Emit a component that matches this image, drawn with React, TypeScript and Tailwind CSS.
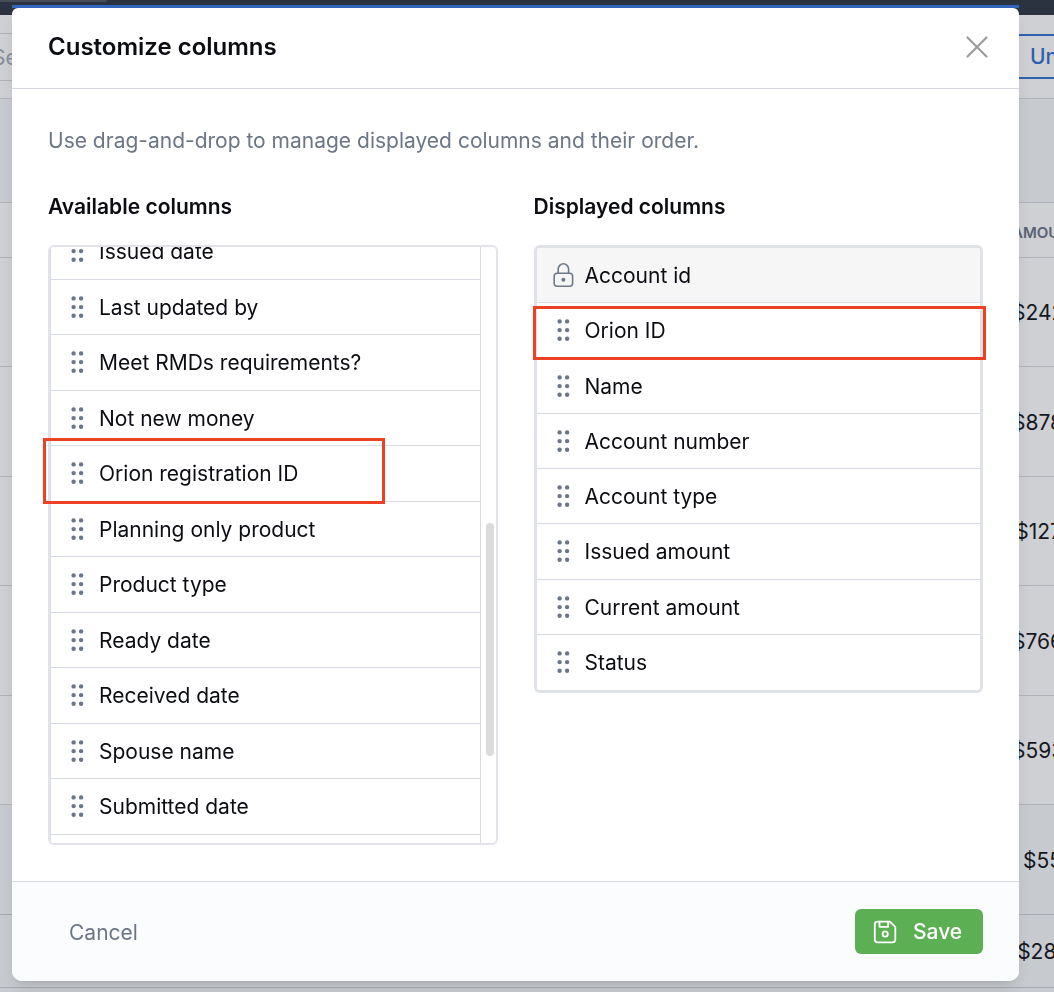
import { ReactNode } from "react";

const available = [
  "Issued date",
  "Last updated by",
  "Meet RMDs requirements?",
  "Not new money",
  "Orion registration ID",
  "Planning only product",
  "Product type",
  "Ready date",
  "Received date",
  "Spouse name",
  "Submitted date",
  "",
];

const displayed = [
  "Account id",
  "Orion ID",
  "Name",
  "Account number",
  "Account type",
  "Issued amount",
  "Current amount",
  "Status",
];

const amounts = ["$242", "$878", "$127", "$766", "$593", "$55", "$28,"];

function GripIcon() {
  return (
    <svg className="size-6 shrink-0" viewBox="0 0 24 24" fill="#6b7686" aria-hidden="true">
      {[3.4, 12.1, 20.8].map((y) => (
        <g key={y}>
          <circle cx="8.6" cy={y} r="2.2" />
          <circle cx="16.1" cy={y} r="2.2" />
        </g>
      ))}
    </svg>
  );
}

function LockIcon() {
  return (
    <svg className="size-6 shrink-0" viewBox="0 0 24 24" fill="none" stroke="#6f7a89" strokeWidth="1.6" aria-hidden="true">
      <rect x="3.2" y="10.2" width="18.4" height="13" rx="3" />
      <path d="M7.2 10.2V6a5.2 5.2 0 0 1 10.4 0v4.2" />
      <circle cx="12.4" cy="16.7" r="2" fill="#6f7a89" stroke="none" />
    </svg>
  );
}

function CloseIcon() {
  return (
    <svg className="size-6" viewBox="0 0 24 24" fill="none" stroke="#9b9b9b" strokeWidth="2.2" strokeLinecap="round" aria-hidden="true">
      <path d="M2.5 2.5l19 19M21.5 2.5l-19 19" />
    </svg>
  );
}

function SaveIcon() {
  return (
    <svg className="size-6" viewBox="0 0 24 24" fill="none" stroke="#fff" strokeWidth="1.8" strokeLinejoin="round" aria-hidden="true">
      <path d="M4.6 1.7h12.2l5.5 5.2v12.7a2.8 2.8 0 0 1-2.8 2.8H4.6a2.8 2.8 0 0 1-2.8-2.8V4.5a2.8 2.8 0 0 1 2.8-2.8z" />
      <path d="M6.5 1.7v5.1h8.7V1.7" />
      <circle cx="12.2" cy="14" r="2.6" />
    </svg>
  );
}

function Row({ icon, label, locked }: { icon: ReactNode; label: string; locked?: boolean }) {
  return (
    <li
      className={
        locked
          ? "flex items-center gap-2.5 border-b border-[#d8dbe3] bg-[#f6f6f6] pl-3.5 text-[#0b0d12]"
          : "flex items-center gap-2.5 border-b border-[#d8dbe3] bg-white pl-3.5 text-[#0b0d12] last:border-b-0"
      }
    >
      {icon}
      <span className="pt-0.5 whitespace-nowrap">{label}</span>
    </li>
  );
}

function Backdrop() {
  return (
    <div className="h-screen overflow-hidden bg-[#c7cacf]" aria-hidden="true">
      <div className="h-[15px] bg-[#2c3340]">
        <div className="h-0.5 w-[107px] rounded-br bg-[#474d58]" />
      </div>
      <div className="flex h-[84px] w-[1090px] items-center justify-between border-b border-[#b0b3ba] bg-[#cfd0d4]">
        <div className="flex h-12 w-80 items-center border-y border-[#b0b3ba] pt-0.5 text-[#868e9a]">
          <span className="-ml-2">Search</span>
        </div>
        <div className="flex h-[45px] w-[90px] items-center border-2 border-[#2f61b1] pl-7 font-medium text-[#2f5eaa]">Undo</div>
      </div>
      <div className="h-[103px]" />
      <table className="w-[1062px] table-fixed border-collapse text-[#14181f]">
        <thead>
          <tr className="h-[55px] border-y border-[#b0b3ba] bg-[#cfd0d4]">
            <th />
            <th className="w-[50px] pt-1.5 text-left text-[15px] font-semibold whitespace-nowrap text-[#596273]">AMOUNT</th>
          </tr>
        </thead>
        <tbody>
          {amounts.map((amount, i) => (
            <tr
              key={amount}
              className={
                i === 6
                  ? "h-[73px] border-b border-[#a9acb2] bg-[#c7cacf]"
                  : i === 5
                    ? "h-[110px] border-b border-[#a9acb2] bg-[#c7cacf]"
                    : "border-b border-[#b0b3ba] bg-[#cfd0d4] odd:h-[109px] even:h-[110px]"
              }
            >
              <td />
              <td className="pt-0.5 text-right">{amount}</td>
            </tr>
          ))}
        </tbody>
      </table>
    </div>
  );
}

export default function App() {
  const scrollToRows = (el: HTMLDivElement | null) => {
    if (el) el.scrollTop = 23;
  };

  return (
    <div className="font-['Inter',sans-serif] text-[21px] leading-7">
      <Backdrop />
      <div className="fixed inset-0 flex flex-col pt-[5px] pr-[35px] pb-[11px] pl-3">
        <div className="h-[3px] shrink-0 bg-[#3267bd]" />
        <div
          role="dialog"
          aria-labelledby="dialog-title"
          className="flex min-h-0 flex-1 flex-col overflow-hidden rounded-t-md rounded-b-[10px] bg-white shadow-lg"
        >
          <header className="flex h-[81px] shrink-0 items-center justify-between border-b border-[#d5d8e0] pr-[30px] pb-0.5 pl-9">
            <h1 id="dialog-title" className="text-2xl font-semibold text-[#0b0d12]">
              Customize columns
            </h1>
            <button type="button" aria-label="Close">
              <CloseIcon />
            </button>
          </header>

          <div className="flex min-h-0 flex-1 flex-col px-9 py-9">
            <p className="shrink-0 pt-0.5 text-[#6b7686]">
              Use drag-and-drop to manage displayed columns and their order.
            </p>
            <div className="grid min-h-0 flex-1 grid-cols-2 gap-9 pt-[38px]">
              <section className="flex min-h-0 flex-col">
                <h2 className="mb-6 font-semibold text-[#0b0d12]">Available columns</h2>
                <div className="relative min-h-0 flex-1">
                  <div
                    ref={scrollToRows}
                    className="h-full overflow-y-auto rounded-md border-2 border-[#e2e4e9] pr-[15px] [scrollbar-width:none]"
                  >
                    <ul className="grid h-[666px] auto-rows-fr border-x border-[#d8dbe3]">
                      {available.map((label) => (
                        <Row key={label} icon={<GripIcon />} label={label} />
                      ))}
                    </ul>
                  </div>
                  <div className="absolute top-[278px] right-1 h-[233px] w-2 rounded-full bg-[#dcdcdc]" />
                  <div className="absolute top-[193px] -left-[5px] h-[66px] w-[342px] border-3 border-[#ec4125]" />
                </div>
              </section>

              <section>
                <h2 className="mb-6 font-semibold text-[#0b0d12]">Displayed columns</h2>
                <div className="relative">
                  <ul className="grid h-[448px] auto-rows-fr overflow-hidden rounded-md border-3 border-[#dfe2e7]">
                    {displayed.map((label, i) => (
                      <Row key={label} locked={i === 0} icon={i === 0 ? <LockIcon /> : <GripIcon />} label={label} />
                    ))}
                  </ul>
                  <div className="absolute top-[61px] -right-[3px] -left-px h-[54px] border-3 border-[#ec4125]" />
                </div>
              </section>
            </div>
          </div>

          <footer className="flex h-[100px] shrink-0 items-center justify-between border-t border-[#d5d8e0] bg-[#fbfcfe] pr-9 pl-14">
            <button type="button" className="pt-0.5 pl-px text-[#6b7686]">
              Cancel
            </button>
            <button
              type="button"
              className="flex h-[45px] w-32 items-center gap-4 rounded-md bg-[#5caf53] pl-[18px] font-medium text-white"
            >
              <SaveIcon />
              <span className="pt-px">Save</span>
            </button>
          </footer>
        </div>
      </div>
    </div>
  );
}
